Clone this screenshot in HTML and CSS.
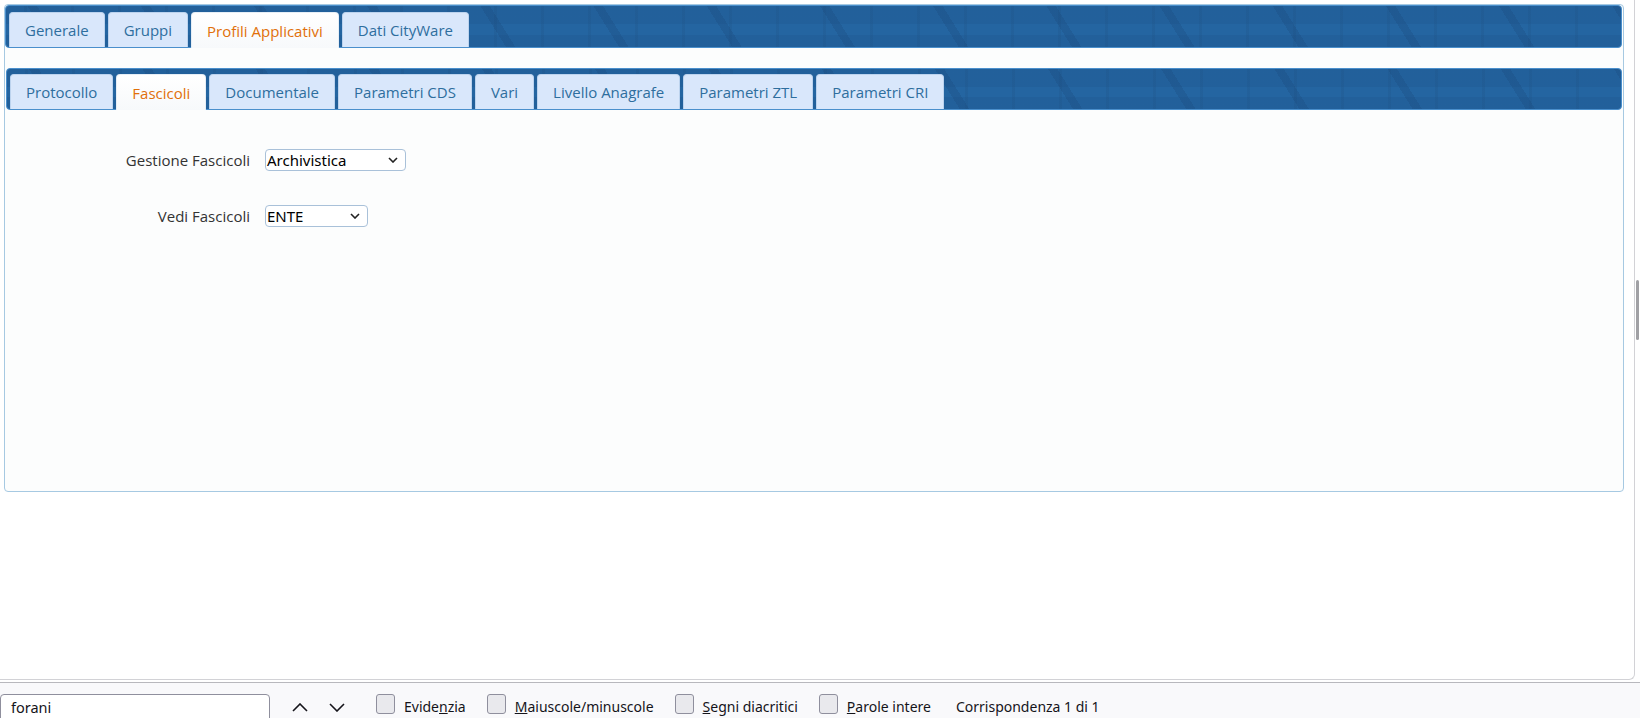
FILE: index.html
```html
<!DOCTYPE html>
<html lang="it">
<head>
    <meta charset="UTF-8">
    <title>Profili Applicativi - Fascicoli</title>
    <link rel="stylesheet" href="styles.css">
</head>
<body>
<div class="viewport">
    <div class="page">
        <div class="frame">
            <div class="tabbar outer">
                <div class="tab">Generale</div>
                <div class="tab">Gruppi</div>
                <div class="tab active">Profili Applicativi</div>
                <div class="tab">Dati CityWare</div>
            </div>

            <div class="tabbar inner">
                <div class="tab">Protocollo</div>
                <div class="tab active">Fascicoli</div>
                <div class="tab">Documentale</div>
                <div class="tab">Parametri CDS</div>
                <div class="tab">Vari</div>
                <div class="tab">Livello Anagrafe</div>
                <div class="tab">Parametri ZTL</div>
                <div class="tab">Parametri CRI</div>
            </div>

            <div class="form">
                <label class="field-label">Gestione Fascicoli</label>
                <div class="select wide">
                    <span>Archivistica</span>
                    <svg width="10" height="6" viewBox="0 0 10 6"><path d="M1 1l4 4 4-4" fill="none" stroke="#222" stroke-width="1.6"/></svg>
                </div>
                <label class="field-label">Vedi Fascicoli</label>
                <div class="select narrow">
                    <span>ENTE</span>
                    <svg width="10" height="6" viewBox="0 0 10 6"><path d="M1 1l4 4 4-4" fill="none" stroke="#222" stroke-width="1.6"/></svg>
                </div>
            </div>
        </div>
    </div>
    <div class="scrollbar"><div class="thumb"></div></div>
</div>

<div class="findbar">
    <div class="find-input">forani</div>
    <div class="find-nav">
        <div class="nav-btn"><svg width="16" height="9" viewBox="0 0 16 9"><path d="M1 8l7-7 7 7" fill="none" stroke="#15141a" stroke-width="1.6"/></svg></div>
        <div class="nav-btn"><svg width="16" height="9" viewBox="0 0 16 9"><path d="M1 1l7 7 7-7" fill="none" stroke="#15141a" stroke-width="1.6"/></svg></div>
    </div>
    <div class="find-option"><span class="checkbox"></span><span>Evide<u>n</u>zia</span></div>
    <div class="find-option"><span class="checkbox"></span><span><u>M</u>aiuscole/minuscole</span></div>
    <div class="find-option"><span class="checkbox"></span><span><u>S</u>egni diacritici</span></div>
    <div class="find-option"><span class="checkbox"></span><span><u>P</u>arole intere</span></div>
    <div class="find-status">Corrispondenza 1 di 1</div>
</div>
</body>
</html>
```

FILE: styles.css
```css
body {
    margin: 0;
    width: 1640px;
    height: 718px;
    overflow: hidden;
    background-color: #ffffff;
    font-family: "Open Sans", sans-serif;
}
.viewport {
    display: flex;
    height: 680px;
}
.page {
    width: 1635px;
    border-right: 1px solid #d2d2d6;
    border-bottom: 1px solid #d2d2d6;
    border-bottom-right-radius: 6px;
    box-sizing: border-box;
    padding: 4px 0 0 4px;
}
.scrollbar {
    width: 4px;
}
.thumb {
    margin-top: 280px;
    margin-left: 1px;
    width: 3px;
    height: 60px;
    background-color: #a0a0a4;
    border-radius: 2px;
}
.frame {
    width: 1620px;
    height: 488px;
    box-sizing: border-box;
    border: 1px solid #a6c9e2;
    border-radius: 4px;
    background-color: #fcfdfd;
    padding: 0 1px 0 0;
}

/* tab bars */
.tabbar {
    display: flex;
    gap: 3px;
    box-sizing: border-box;
    border: 1px solid #4a8fcc;
    border-radius: 4px;
    background-color: #2465a1;
    background-image:
        repeating-linear-gradient(58deg, transparent 0 40px, rgba(25, 70, 120, 0.26) 40px 48px, transparent 48px 96px),
        repeating-linear-gradient(90deg, transparent 0 18px, rgba(30, 80, 130, 0.22) 18px 21px, transparent 21px 47px),
        linear-gradient(rgba(20, 60, 110, 0.12) 0 45%, transparent 45% 70%, rgba(20, 60, 110, 0.12) 70%);
    align-items: flex-end;
}
.tabbar.outer {
    height: 43px;
    padding-left: 3px;
}
.tabbar.inner {
    height: 42px;
    margin: 20px 0 0 1px;
    padding-left: 3px;
}
.tab {
    height: 35px;
    padding: 0 15px;
    display: flex;
    align-items: center;
    background-color: #d9e7fb;
    border: 1px solid #bcd3ee;
    border-bottom: none;
    border-radius: 4px 4px 0 0;
    color: #2e6e9e;
    font-size: 15px;
    box-sizing: border-box;
}
.tab.active {
    height: 36px;
    margin-bottom: -1px;
    background: linear-gradient(#ffffff, #f7f9fb);
    border-color: #e6eef6;
    color: #e17009;
}

/* form */
.form {
    display: grid;
    grid-template-columns: 245px auto;
    column-gap: 15px;
    row-gap: 34px;
    justify-items: start;
    align-items: center;
    padding-top: 39px;
}
.field-label {
    justify-self: end;
    font-size: 15px;
    color: #333333;
}
.select {
    height: 22px;
    box-sizing: border-box;
    border: 1px solid #a9c1d9;
    border-radius: 4px;
    background-color: #ffffff;
    display: flex;
    align-items: center;
    justify-content: space-between;
    padding: 0 7px 0 1px;
    font-family: "Noto Sans", sans-serif;
    font-size: 15px;
    color: #000000;
}
.select.wide {
    width: 141px;
}
.select.narrow {
    width: 103px;
}

/* find bar */
.findbar {
    margin-top: 2px;
    border-top: 1px solid #b8b8bd;
    background-color: #f9f9fb;
    height: 40px;
    display: flex;
    align-items: flex-start;
    gap: 21px;
    padding-top: 11px;
    box-sizing: border-box;
    font-family: "Noto Sans", sans-serif;
    font-size: 14px;
    color: #15141a;
}
.find-input {
    width: 270px;
    height: 30px;
    box-sizing: border-box;
    border: 1px solid #8f8f9d;
    border-radius: 4px;
    background-color: #ffffff;
    padding: 2px 10px;
    font-size: 14.5px;
}
.find-nav {
    display: flex;
    margin-left: -10px;
}
.nav-btn {
    width: 37px;
    height: 24px;
    display: flex;
    align-items: center;
    justify-content: center;
    padding-top: 3px;
    box-sizing: border-box;
}
.find-option,
.find-status {
    display: flex;
    align-items: flex-start;
    padding-top: 3px;
}
.find-option {
    gap: 9px;
}
.find-status {
    margin-left: 4px;
}
.checkbox {
    width: 19px;
    height: 20px;
    box-sizing: border-box;
    border: 1px solid #8f8f9d;
    border-radius: 3px;
    background-color: #e9e9ed;
    margin-top: -3px;
}
```
